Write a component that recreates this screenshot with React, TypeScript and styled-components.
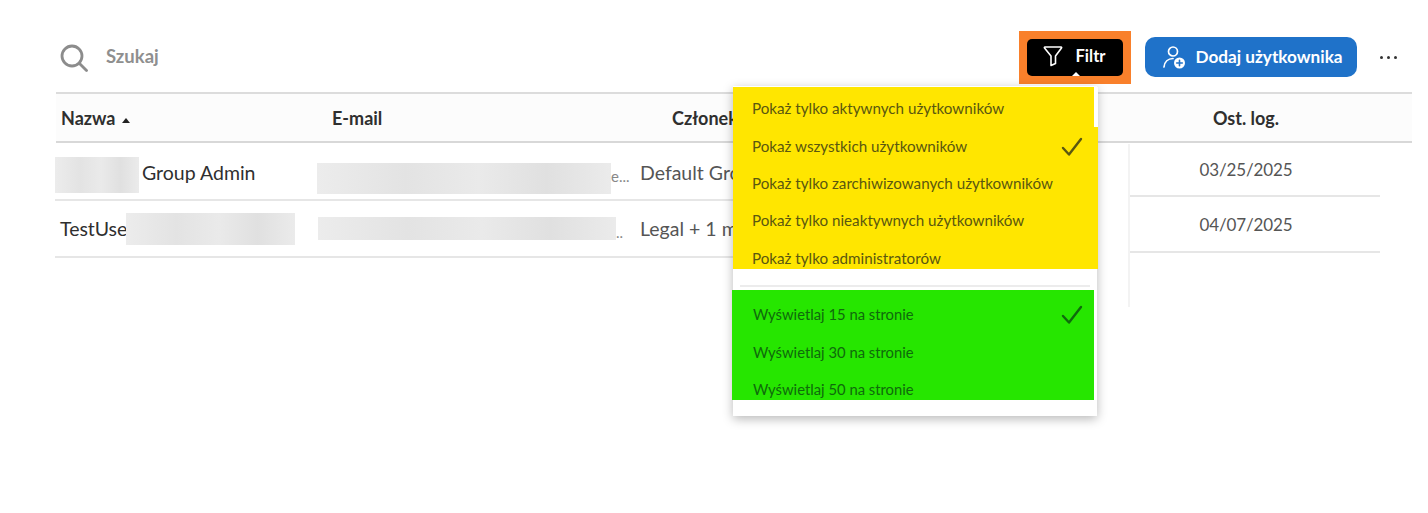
import React from 'react';
import styled, { createGlobalStyle } from 'styled-components';

const GlobalStyle = createGlobalStyle`
  html, body {
    margin: 0;
    padding: 0;
    background: #fff;
    font-family: Lato, "Open Sans", sans-serif;
  }
`;

const Page = styled.div`
  position: relative;
  width: 1428px;
  height: 513px;
  overflow: hidden;
  padding-top: 31px;
  box-sizing: border-box;
`;

const Toolbar = styled.div`
  display: flex;
  align-items: center;
  height: 52px;
  padding: 0 31px 0 60px;
`;

const Search = styled.div`
  display: flex;
  align-items: center;
  gap: 18px;
  flex: 1;
  padding-bottom: 2px;
  color: #8f8f8f;
  font-size: 18.5px;
  font-weight: 700;
  line-height: 24px;
  svg {
    margin-top: 3px;
  }
`;

const FilterFrame = styled.div`
  display: flex;
  padding: 8px;
  background: #f9802b;
`;

const FilterButton = styled.button`
  position: relative;
  display: flex;
  align-items: center;
  justify-content: center;
  gap: 13px;
  width: 96px;
  height: 37px;
  padding: 0 2px 2px 0;
  border: 0;
  border-radius: 5px;
  background: #000;
  color: #fff;
  font: 700 16.5px Lato, sans-serif;
  &::after {
    content: '';
    position: absolute;
    left: 45px;
    bottom: 0;
    border: 4px solid transparent;
    border-top: 0;
    border-bottom-color: #fff;
  }
`;

const AddButton = styled.button`
  display: flex;
  align-items: center;
  justify-content: center;
  gap: 9px;
  width: 212px;
  height: 40px;
  margin-left: 14px;
  padding: 0 0 1px 3px;
  border: 0;
  border-radius: 10px;
  background: #1f72c9;
  color: #fff;
  font: 700 17.2px Lato, sans-serif;
`;

const MoreButton = styled.div`
  display: flex;
  gap: 4px;
  margin-left: 23px;
  span {
    width: 3px;
    height: 3px;
    border-radius: 50%;
    background: #333;
  }
`;

const HeaderRow = styled.div`
  display: grid;
  grid-template-columns: 271px 340px 445px 268px 32px;
  align-items: center;
  width: 1356px;
  height: 51px;
  margin: 9px 0 0 56px;
  box-sizing: border-box;
  background: #fcfcfc;
  border-top: 2px solid #dcdcdc;
  border-bottom: 2px solid #d8d8d8;
  color: #2f2f2f;
  font-size: 18px;
  font-weight: 700;
`;

const HeaderCell = styled.div<{ $center?: boolean }>`
  display: flex;
  align-items: center;
  gap: 6px;
  padding-left: ${(p) => (p.$center ? '0' : '5px')};
  justify-content: ${(p) => (p.$center ? 'center' : 'flex-start')};
  white-space: nowrap;
`;

const SortArrow = styled.span`
  width: 0;
  height: 0;
  margin-top: 5px;
  border: 4.5px solid transparent;
  border-top: 0;
  border-bottom: 5px solid #222;
`;

const Body = styled.div`
  display: flex;
  align-items: flex-start;
  margin: 1px 0 0 55px;
`;

const MainRows = styled.div`
  width: 1042px;
`;

const Row = styled.div<{ $nudge?: number }>`
  display: grid;
  grid-template-columns: 262px 323px 1fr;
  align-items: center;
  height: 57px;
  padding-top: ${(p) => p.$nudge ?? 0}px;
  box-sizing: border-box;
  border-bottom: 2px solid #e6e6e6;
  font-size: 19.5px;
  color: #555;
  white-space: nowrap;
`;

const NameCell = styled.div`
  display: flex;
  align-items: center;
  color: #2f2f2f;
`;

const NameText = styled.span<{ $left: number; $width?: number }>`
  flex: none;
  margin-left: ${(p) => p.$left}px;
  width: ${(p) => (p.$width ? `${p.$width}px` : 'auto')};
`;

const Blur = styled.span<{ $w: number; $h: number; $left?: number; $top?: number }>`
  display: block;
  flex: none;
  width: ${(p) => p.$w}px;
  height: ${(p) => p.$h}px;
  margin-left: ${(p) => p.$left ?? 0}px;
  margin-top: ${(p) => p.$top ?? 0}px;
  background: linear-gradient(90deg, #ececec, #e3e3e3 30%, #eaeaea 55%, #e0e0e0 78%, #ebebeb);
  filter: blur(0.5px);
`;

const EmailCell = styled.div`
  display: flex;
  align-items: center;
  font-size: 15px;
  color: #888;
`;

const EmailTail = styled.span`
  margin-top: 6px;
`;

const DateColumn = styled.div`
  width: 252px;
  height: 163px;
  margin-left: 31px;
  border-left: 2px solid #f3f3f3;
  box-sizing: border-box;
`;

const DateRow = styled.div<{ $h: number }>`
  display: flex;
  align-items: center;
  justify-content: center;
  height: ${(p) => p.$h}px;
  box-sizing: border-box;
  padding-right: 18px;
  border-bottom: 2px solid #e6e6e6;
  font-size: 17px;
  letter-spacing: -0.1px;
  color: #555;
`;

const Menu = styled.div`
  position: absolute;
  left: 733px;
  top: 86px;
  width: 364px;
  height: 330px;
  padding-top: 1px;
  box-sizing: border-box;
  background: #fff;
  box-shadow: 0 3px 10px rgba(0, 0, 0, 0.28);
`;

const YellowGroup = styled.div`
  position: relative;
  height: 182px;
  margin: 0 -1px 0 0;
  padding-top: 2.6px;
  box-sizing: border-box;
  background: #ffe600;
  color: #5a5710;
  font-size: 15.2px;
  &::after {
    content: '';
    position: absolute;
    top: 0;
    right: 0;
    width: 4px;
    height: 40px;
    background: #fff;
  }
`;

const Divider = styled.div`
  height: 2px;
  margin: 16px 7px 3px;
  background: #ececec;
`;

const GreenGroup = styled.div`
  height: 110px;
  margin: 0 3px 0 -1px;
  padding-top: 5.6px;
  box-sizing: border-box;
  background: #26e600;
  color: #0f6a0c;
  font-size: 14.8px;
`;

const MenuItem = styled.div<{ $left: number; $right: number }>`
  display: flex;
  align-items: center;
  justify-content: space-between;
  height: 37.4px;
  padding: 0 ${(p) => p.$right}px 0 ${(p) => p.$left}px;
  white-space: nowrap;
  svg {
    margin-top: 2px;
  }
`;

const FilterIcon = () => (
  <svg width="20" height="22" viewBox="0 0 20 22" fill="none" stroke="#fff" strokeWidth="1.6" strokeLinejoin="round">
    <path d="M2 2h16a.6.6 0 0 1 .5 1L12.5 11v7.5L8 20.5V11L1.5 3a.6.6 0 0 1 .5-1z" />
  </svg>
);

const UserPlusIcon = () => (
  <svg width="24" height="24" viewBox="0 0 24 24" fill="none" stroke="#fff" strokeWidth="1.7" strokeLinecap="round">
    <circle cx="11" cy="6.5" r="4.5" />
    <path d="M2 22c.5-5 4-8.5 9-8.5" />
    <circle cx="17.5" cy="18" r="5.5" fill="#fff" stroke="none" />
    <path d="M17.5 15.2v5.6M14.7 18h5.6" stroke="#1f72c9" strokeWidth="1.6" />
  </svg>
);

const SearchIcon = () => (
  <svg width="28" height="28" viewBox="0 0 28 28" fill="none" stroke="#8c8c8c" strokeWidth="2.8" strokeLinecap="round">
    <circle cx="12" cy="12" r="10" />
    <path d="M19.5 19.5l7 7" />
  </svg>
);

const CheckIcon = () => (
  <svg width="22" height="20" viewBox="0 0 22 20" fill="none" stroke="currentColor" strokeWidth="2.4" strokeLinecap="round" strokeLinejoin="round">
    <path d="M2 11l6 6.5L20 2" />
  </svg>
);

function App() {
  return (
    <Page>
      <GlobalStyle />
      <Toolbar>
        <Search>
          <SearchIcon />
          Szukaj
        </Search>
        <FilterFrame>
          <FilterButton>
            <FilterIcon />
            Filtr
          </FilterButton>
        </FilterFrame>
        <AddButton>
          <UserPlusIcon />
          Dodaj użytkownika
        </AddButton>
        <MoreButton>
          <span />
          <span />
          <span />
        </MoreButton>
      </Toolbar>

      <HeaderRow>
        <HeaderCell>
          Nazwa <SortArrow />
        </HeaderCell>
        <HeaderCell>E-mail</HeaderCell>
        <HeaderCell>Członek</HeaderCell>
        <HeaderCell $center>Ost. log.</HeaderCell>
        <HeaderCell />
      </HeaderRow>

      <Body>
        <MainRows>
          <Row $nudge={2}>
            <NameCell>
              <Blur $w={84} $h={36} $top={4} />
              <NameText $left={3}>Group Admin</NameText>
            </NameCell>
            <EmailCell>
              <Blur $w={294} $h={31} $top={12} />
              <EmailTail>e...</EmailTail>
            </EmailCell>
            <div>Default Gró</div>
          </Row>
          <Row>
            <NameCell>
              <NameText $left={5} $width={66}>TestUse</NameText>
              <Blur $w={169} $h={32} />
            </NameCell>
            <EmailCell>
              <Blur $w={298} $h={23} $left={1} />
              <EmailTail>..</EmailTail>
            </EmailCell>
            <div>Legal + 1 m</div>
          </Row>
        </MainRows>
        <DateColumn>
          <DateRow $h={53}>03/25/2025</DateRow>
          <DateRow $h={56}>04/07/2025</DateRow>
        </DateColumn>
      </Body>

      <Menu>
        <YellowGroup>
          <MenuItem $left={19} $right={15}>Pokaż tylko aktywnych użytkowników</MenuItem>
          <MenuItem $left={19} $right={15}>
            Pokaż wszystkich użytkowników
            <CheckIcon />
          </MenuItem>
          <MenuItem $left={19} $right={15}>Pokaż tylko zarchiwizowanych użytkowników</MenuItem>
          <MenuItem $left={19} $right={15}>Pokaż tylko nieaktywnych użytkowników</MenuItem>
          <MenuItem $left={19} $right={15}>Pokaż tylko administratorów</MenuItem>
        </YellowGroup>
        <Divider />
        <GreenGroup>
          <MenuItem $left={21} $right={11}>
            Wyświetlaj 15 na stronie
            <CheckIcon />
          </MenuItem>
          <MenuItem $left={21} $right={11}>Wyświetlaj 30 na stronie</MenuItem>
          <MenuItem $left={21} $right={11}>Wyświetlaj 50 na stronie</MenuItem>
        </GreenGroup>
      </Menu>
    </Page>
  );
}

export default App;
